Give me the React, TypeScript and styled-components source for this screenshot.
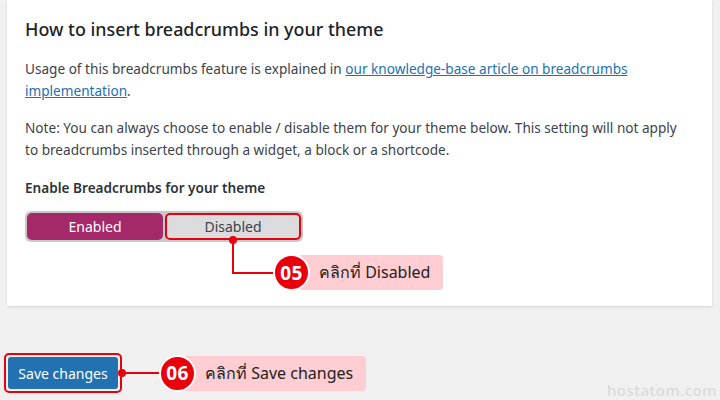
import React from "react";
import styled, { createGlobalStyle } from "styled-components";

const Global = createGlobalStyle`
  html, body { margin: 0; padding: 0; }
  body {
    background: #f0f0f1;
    font-family: "Noto Sans", "Open Sans", sans-serif;
    width: 720px;
    height: 400px;
    overflow: hidden;
  }
`;

const Page = styled.div`
  position: relative;
  width: 720px;
  height: 400px;
  padding: 0 8px 0 7px;
  box-sizing: border-box;
`;

const Card = styled.section`
  position: relative;
  background: #fff;
  height: 306px;
  box-sizing: border-box;
  padding: 15px 18px 0 18px;
  box-shadow: 0 1px 2px rgba(0, 0, 0, 0.12);
`;

const Heading = styled.h2`
  margin: 0;
  font-size: 17.9px;
  font-weight: 500;
  color: #1d2327;
  line-height: 28px;
`;

const Para = styled.p`
  margin: 15px 0 0;
  max-width: 655px;
  font-size: 13.6px;
  line-height: 22px;
  color: #3c434a;
`;

const Link = styled.a`
  color: #2271b1;
  text-decoration: underline;
`;

const Label = styled.div`
  margin-top: 17px;
  font-size: 13.6px;
  font-weight: 600;
  color: #2c3338;
  line-height: 20px;
`;

const Toggle = styled.div`
  margin-top: 13px;
  display: inline-flex;
  gap: 2px;
  padding: 2px;
  background: #c8c8cb;
  border-radius: 6px;
`;

const Choice = styled.div<{ $active?: boolean; $marked?: boolean }>`
  width: 136px;
  height: 27px;
  box-sizing: border-box;
  display: flex;
  align-items: center;
  justify-content: center;
  border-radius: 5px;
  font-size: 14px;
  background: ${(p) => (p.$active ? "#a4286a" : "#dcdcde")};
  color: ${(p) => (p.$active ? "#fff" : "#3c434a")};
  border: ${(p) => (p.$marked ? "2px solid #e8000b" : "none")};
`;

const Footer = styled.div`
  display: flex;
  align-items: center;
  padding-top: 47px;
  margin-left: -3px;
`;

const SaveOutline = styled.div`
  padding: 2px;
  border: 2px solid #e8000b;
  border-radius: 5px;
`;

const SaveButton = styled.button`
  width: 110px;
  height: 32px;
  background: #2271b1;
  color: #fff;
  border: none;
  border-radius: 3px;
  font-family: inherit;
  font-size: 14px;
  display: block;
`;

const Connector = styled.div<{ $w: number }>`
  position: relative;
  width: ${(p) => p.$w}px;
  height: 2px;
  background: #e8000b;
  &::before {
    content: "";
    position: absolute;
    left: -4px;
    top: -3px;
    width: 8px;
    height: 8px;
    border-radius: 50%;
    background: #e8000b;
  }
`;

const Callout = styled.div`
  display: flex;
  align-items: center;
`;

const Badge = styled.div`
  position: relative;
  z-index: 1;
  width: 33px;
  height: 33px;
  border-radius: 50%;
  background: #e8000b;
  border: 2px solid #fff;
  color: #fff;
  font-weight: 700;
  font-size: 19px;
  display: flex;
  align-items: center;
  justify-content: center;
  letter-spacing: 0.5px;
`;

const Tag = styled.div`
  margin-left: -10px;
  height: 35px;
  padding: 0 13px 0 19px;
  background: #ffcdd2;
  border-radius: 0 4px 4px 0;
  display: flex;
  align-items: center;
  font-size: 16px;
  font-weight: 400;
  color: #222;
`;

const Elbow = styled.div`
  position: absolute;
  left: 218px;
  top: 235px;
  display: flex;
  align-items: flex-end;
`;

const ElbowLine = styled.svg`
  display: block;
  margin-right: -2px;
  margin-bottom: 16px;
`;

const Watermark = styled.div`
  position: absolute;
  right: 3px;
  bottom: 0px;
  font-size: 15px;
  color: #dadada;
  font-weight: 500;
  letter-spacing: 0.5px;
`;

export default function App() {
  return (
    <>
      <Global />
      <Page>
        <Card>
          <Heading>How to insert breadcrumbs in your theme</Heading>
          <Para>
            Usage of this breadcrumbs feature is explained in{" "}
            <Link href="#">our knowledge-base article on breadcrumbs implementation</Link>.
          </Para>
          <Para>
            Note: You can always choose to enable / disable them for your theme below. This setting will not apply to
            breadcrumbs inserted through a widget, a block or a shortcode.
          </Para>
          <Label>Enable Breadcrumbs for your theme</Label>
          <Toggle>
            <Choice $active>Enabled</Choice>
            <Choice $marked>Disabled</Choice>
          </Toggle>
          <Elbow>
            <ElbowLine width="50" height="40" viewBox="0 0 50 40">
              <circle cx="8" cy="5" r="4" fill="#e8000b" />
              <path d="M8 5 V38 H50" fill="none" stroke="#e8000b" strokeWidth="2" />
            </ElbowLine>
            <Callout>
              <Badge>05</Badge>
              <Tag>คลิกที่ Disabled</Tag>
            </Callout>
          </Elbow>
        </Card>
        <Footer>
          <SaveOutline>
            <SaveButton>Save changes</SaveButton>
          </SaveOutline>
          <Connector $w={37} />
          <Callout>
            <Badge>06</Badge>
            <Tag>คลิกที่ Save changes</Tag>
          </Callout>
        </Footer>
        <Watermark>hostatom.com</Watermark>
      </Page>
    </>
  );
}
